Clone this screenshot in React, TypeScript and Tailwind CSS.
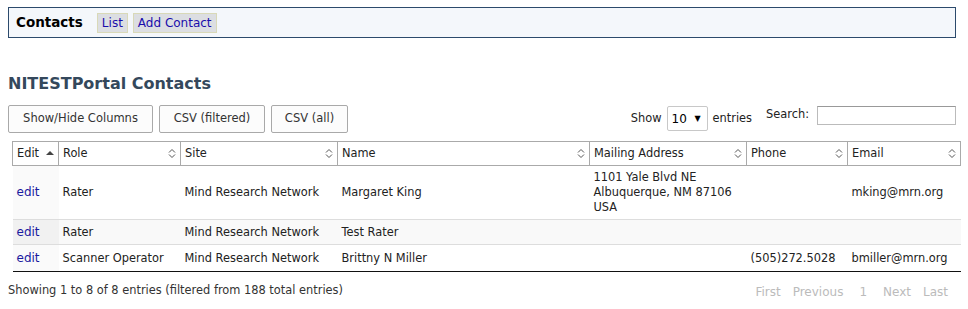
import React from "react";

const SortBoth = () => (
  <svg width="8" height="11" viewBox="0 0 8 11" className="shrink-0">
    <path d="M1 4.5 L4 1.5 L7 4.5" fill="none" stroke="#555" strokeWidth="1" />
    <path d="M1 6.5 L4 9.5 L7 6.5" fill="none" stroke="#555" strokeWidth="1" />
  </svg>
);

const SortAsc = () => (
  <svg width="8" height="6" viewBox="0 0 8 6" className="shrink-0">
    <path d="M0 5 L4 1 L8 5 Z" fill="#444" />
  </svg>
);

type Row = {
  role: string;
  site: string;
  name: string;
  address: string[];
  phone: string;
  email: string;
  h: string;
};

const rows: Row[] = [
  {
    role: "Rater",
    site: "Mind Research Network",
    name: "Margaret King",
    address: ["1101 Yale Blvd NE", "Albuquerque, NM 87106", "USA"],
    phone: "",
    email: "mking@mrn.org",
    h: "h-[54px]",
  },
  {
    role: "Rater",
    site: "Mind Research Network",
    name: "Test Rater",
    address: [],
    phone: "",
    email: "",
    h: "h-[25px]",
  },
  {
    role: "Scanner Operator",
    site: "Mind Research Network",
    name: "Brittny N Miller",
    address: [],
    phone: "(505)272.5028",
    email: "bmiller@mrn.org",
    h: "h-[27px]",
  },
];

const headers = [
  { label: "Edit", w: 46, asc: true },
  { label: "Role", w: 122 },
  { label: "Site", w: 157 },
  { label: "Name", w: 252 },
  { label: "Mailing Address", w: 157 },
  { label: "Phone", w: 101 },
  { label: "Email", w: 113 },
];

export default function App() {
  return (
    <div
      className="w-[968px] h-[309px] bg-white text-[11.4px] text-[#222] overflow-hidden"
      style={{ fontFamily: '"DejaVu Sans", Verdana, sans-serif' }}
    >
      <div className="pt-[7px] px-[8px]">
        <div className="h-[31px] w-[948px] border border-[#2c4a6c] bg-[#f4f7fb] flex items-center pl-[7px] gap-[14px]">
          <span className="font-bold text-[13.5px] text-black">Contacts</span>
          <div className="flex gap-[5px]">
            <span className="h-[20px] px-[4px] flex items-center bg-[#dcdee2] border border-[#d9d9b8] text-[12px] text-[#1a0dab]">
              List
            </span>
            <span className="h-[20px] px-[4px] flex items-center bg-[#dcdee2] border border-[#d9d9b8] text-[12px] text-[#1a0dab]">
              Add Contact
            </span>
          </div>
        </div>

        <h2 className="mt-[36px] font-bold text-[16px] text-[#34485c] leading-[20px]">
          NITESTPortal Contacts
        </h2>

        <div className="mt-[11px] flex items-start">
          <div className="flex gap-[6px]">
            <button className="h-[28px] w-[145px] border border-[#a9a9a9] rounded-[2px] bg-[#fcfcfc] text-[11.5px] text-[#333]">
              Show/Hide Columns
            </button>
            <button className="h-[28px] w-[106px] border border-[#a9a9a9] rounded-[2px] bg-[#fcfcfc] text-[11.5px] text-[#333]">
              CSV (filtered)
            </button>
            <button className="h-[28px] w-[77px] border border-[#a9a9a9] rounded-[2px] bg-[#fcfcfc] text-[11.5px] text-[#333]">
              CSV (all)
            </button>
          </div>
          <div className="ml-auto mr-[4px] flex items-start">
            <div className="flex items-center gap-[5px] h-[27px]">
              <span>Show</span>
              <div className="h-[25px] w-[41px] border border-[#c8c8c8] rounded-[2px] flex items-center justify-between pl-[4px] pr-[6px] text-[12px] text-black">
                <span>10</span>
                <span className="text-[8px]">▼</span>
              </div>
              <span>entries</span>
            </div>
            <div className="ml-[14px] flex items-center gap-[8px] h-[20px]">
              <span>Search:</span>
              <div className="h-[19px] w-[139px] border border-[#bbb] border-t-[#999] bg-white" />
            </div>
          </div>
        </div>

        <table className="mt-[8px] ml-[4px] w-[948px] table-fixed border-collapse">
          <colgroup>
            {headers.map((h) => (
              <col key={h.label} style={{ width: h.w }} />
            ))}
          </colgroup>
          <thead>
            <tr className="h-[24px]">
              {headers.map((h) => (
                <th
                  key={h.label}
                  className="border border-[#aaa] font-normal text-left px-[4px] py-0 bg-white"
                >
                  <div className="flex items-center justify-between">
                    <span>{h.label}</span>
                    {h.asc ? <SortAsc /> : <SortBoth />}
                  </div>
                </th>
              ))}
            </tr>
          </thead>
          <tbody>
            {rows.map((r, i) => {
              const odd = i % 2 === 1;
              const bg = odd ? "bg-[#f9f9f9]" : "bg-white";
              const sortBg = odd ? "bg-[#f1f1f1]" : "bg-[#fafafa]";
              const last = i === rows.length - 1;
              const bcls = last ? "border-b border-b-[#111]" : "border-b border-b-[#ddd]";
              const cell = `px-[4px] py-[4px] leading-[15px] align-middle ${bcls}`;
              return (
                <tr key={i} className={`${bg} ${r.h}`}>
                  <td className={`${cell} ${sortBg}`}>
                    <span className="text-[#1a1aa0] text-[12px]">edit</span>
                  </td>
                  <td className={cell}>{r.role}</td>
                  <td className={cell}>{r.site}</td>
                  <td className={cell}>{r.name}</td>
                  <td className={cell}>
                    {r.address.map((a) => (
                      <div key={a}>{a}</div>
                    ))}
                  </td>
                  <td className={cell}>{r.phone}</td>
                  <td className={cell}>{r.email}</td>
                </tr>
              );
            })}
          </tbody>
        </table>

        <div className="mt-[8px] flex items-center">
          <span className="text-[#333]">Showing 1 to 8 of 8 entries (filtered from 188 total entries)</span>
          <div className="ml-auto mr-[12px] mt-[3px] flex gap-[12px] text-[#bbb] text-[12px]">
            <span>First</span>
            <span>Previous</span>
            <span className="px-[4px]">1</span>
            <span>Next</span>
            <span>Last</span>
          </div>
        </div>
      </div>
    </div>
  );
}
